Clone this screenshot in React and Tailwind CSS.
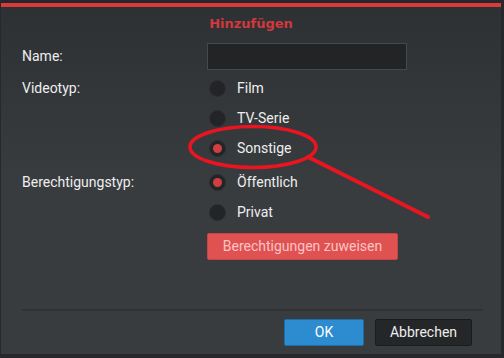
import React from "react";

function Radio({ checked, label }) {
  return (
    <div className="flex items-center h-[30px] pl-[2px]">
      <div className="w-[17px] h-[17px] rounded-full bg-[#222427] border border-[#2c2e31] flex items-center justify-center">
        {checked && <div className="w-[9px] h-[9px] rounded-full bg-[#cf3f41]" />}
      </div>
      <span className="ml-[11px] text-[#eeeeee]">{label}</span>
    </div>
  );
}

export default function App() {
  return (
    <div className="relative w-[504px] h-[358px] bg-[#26282b] overflow-hidden pt-[3px] pl-[1px] pr-[3px] pb-[4px] font-['Roboto',sans-serif] text-[14px]">
      <div className="flex flex-col h-full border-t-4 border-[#d93a3a] bg-gradient-to-b from-[#2e3134] via-[#393c3f] to-[#393c3f]">
        <div className="h-[31px] pt-[2px] flex items-center justify-center">
          <span className="font-['DejaVu_Sans',sans-serif] font-bold text-[13px] text-[#d2383c]">Hinzufügen</span>
        </div>
        <div className="pl-[21px] mt-[5px]">
          <div className="flex items-center h-[27px]">
            <div className="w-[185px] text-[#eeeeee]">Name:</div>
            <div className="w-[200px] h-[27px] bg-[#222426] border border-[#46494c]" />
          </div>
          <div className="flex mt-[3px]">
            <div className="w-[185px] h-[30px] flex items-center text-[#eeeeee]">Videotyp:</div>
            <div className="flex flex-col">
              <Radio label="Film" />
              <Radio label="TV-Serie" />
              <Radio checked label="Sonstige" />
            </div>
          </div>
          <div className="flex mt-[4px]">
            <div className="w-[185px] h-[30px] flex items-center text-[#eeeeee]">Berechtigungstyp:</div>
            <div className="flex flex-col">
              <Radio checked label="Öffentlich" />
              <Radio label="Privat" />
              <button className="mt-[6px] w-[191px] h-[27px] rounded-[2px] bg-[#e05252] border border-[#c84545] text-[#fbc4c4] text-[14px]">
                Berechtigungen zuweisen
              </button>
            </div>
          </div>
        </div>
        <div className="flex-1" />
        <div className="ml-[21px] mr-[18px] h-[2px] bg-[#303336]" />
        <div className="flex justify-end gap-[11px] pr-[29px] pt-[8px] pb-[8px]">
          <button className="w-[80px] h-[27px] rounded-[2px] bg-[#2d8bd0] border border-[#1e6ca8] text-white">OK</button>
          <button className="w-[97px] h-[27px] rounded-[2px] bg-[#242628] border border-[#1a1b1d] text-[#eeeeee]">Abbrechen</button>
        </div>
      </div>
      <svg className="absolute inset-0 pointer-events-none" width="504" height="358" viewBox="0 0 504 358">
        <ellipse cx="253" cy="147" rx="63" ry="20.5" fill="none" stroke="#ea1520" strokeWidth="3.5" />
        <line x1="308" y1="157" x2="428" y2="217" stroke="#ea1520" strokeWidth="4" strokeLinecap="round" />
      </svg>
    </div>
  );
}
